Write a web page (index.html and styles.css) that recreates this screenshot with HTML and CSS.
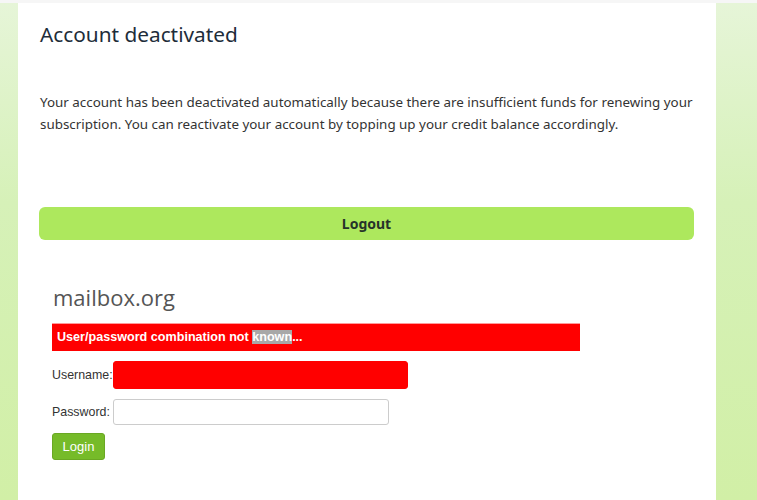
FILE: index.html
```html
<!DOCTYPE html>
<html>
<head>
<meta charset="utf-8">
<link rel="stylesheet" href="styles.css">
</head>
<body>
<div class="topbar"></div>
<div class="layout">
  <div class="side side-left"></div>
  <main class="panel">
    <h1 class="title">Account deactivated</h1>
    <p class="message">Your account has been deactivated automatically because there are insufficient funds for renewing your subscription. You can reactivate your account by topping up your credit balance accordingly.</p>
    <button class="logout">Logout</button>
    <section class="login">
      <h2 class="brand">mailbox.org</h2>
      <div class="error">User/password combination not <span class="sel">known</span>...</div>
      <div class="row row-user">
        <label class="lbl">Username:</label>
        <input class="field field-user" type="text">
      </div>
      <div class="row row-pass">
        <label class="lbl">Password:</label>
        <input class="field field-pass" type="password">
      </div>
      <button class="login-btn">Login</button>
    </section>
  </main>
  <div class="side side-right"></div>
</div>
</body>
</html>
```
FILE: styles.css
```css
html, body {
  margin: 0;
  padding: 0;
  height: 100%;
}
body {
  background: #d2efaa;
  overflow: hidden;
}
.topbar {
  height: 3px;
  background: #f6f6f6;
}
.layout {
  display: flex;
  height: 497px;
}
.side {
  background: linear-gradient(180deg, #e6f5d8 0%, #d6f1b8 40%, #d1efa6 100%);
}
.side-left {
  width: 18px;
  flex: none;
}
.side-right {
  flex: 1;
}
.panel {
  width: 655px;
  flex: none;
  background: #ffffff;
  padding: 0 22px 0 21px;
}
.title {
  margin: 17px 0 0 1px;
  font-family: "Noto Sans", sans-serif;
  font-weight: 400;
  font-size: 20.8px;
  line-height: 28px;
  color: #1e2d3a;
}
.message {
  margin: 43px 0 0 1px;
  font-family: "Noto Sans", sans-serif;
  font-size: 13.4px;
  line-height: 22px;
  color: #333333;
}
.logout {
  display: block;
  width: 655px;
  height: 33px;
  margin: 72px 0 0 0;
  border: none;
  border-radius: 6px;
  background: #ade85d;
  font-family: "Noto Sans", sans-serif;
  font-weight: 700;
  font-size: 14px;
  color: #26332a;
  padding: 0;
}
.login {
  padding: 43px 0 0 13px;
}
.brand {
  margin: 0 0 0 1px;
  font-family: "Open Sans", sans-serif;
  font-weight: 400;
  font-size: 22px;
  line-height: 28px;
  color: #555555;
}
.error {
  height: 28px;
  margin-top: 12px;
  padding-left: 5px;
  background: #ff0000;
  border-top: 1px solid #ff9a9a;
  box-sizing: border-box;
  width: 528px;
  font-family: "Liberation Sans", Arial, sans-serif;
  font-weight: 700;
  font-size: 12.6px;
  line-height: 26px;
  color: #ffffff;
}
.sel {
  background: #a8a8a8;
}
.row {
  display: flex;
  align-items: center;
  font-family: "Liberation Sans", Arial, sans-serif;
  font-size: 12.4px;
  color: #333333;
}
.row-user {
  margin-top: 10px;
}
.row-pass {
  margin-top: 10px;
}
.lbl {
  width: 61px;
  flex: none;
  white-space: nowrap;
}
.field {
  box-sizing: border-box;
  border: 1px solid #cccccc;
  border-radius: 3px;
  padding: 0;
  margin: 0;
  background: #ffffff;
}
.field-user {
  width: 295px;
  height: 28px;
  background: #ff0000;
  border-color: #ff0000;
}
.field-pass {
  width: 276px;
  height: 26px;
}
.login-btn {
  display: block;
  margin-top: 8px;
  width: 53px;
  height: 27px;
  border: 1px solid #6aa823;
  border-radius: 3px;
  background: #76bb29;
  color: #ffffff;
  font-family: "Liberation Sans", Arial, sans-serif;
  font-size: 13px;
  padding: 0;
}
```
